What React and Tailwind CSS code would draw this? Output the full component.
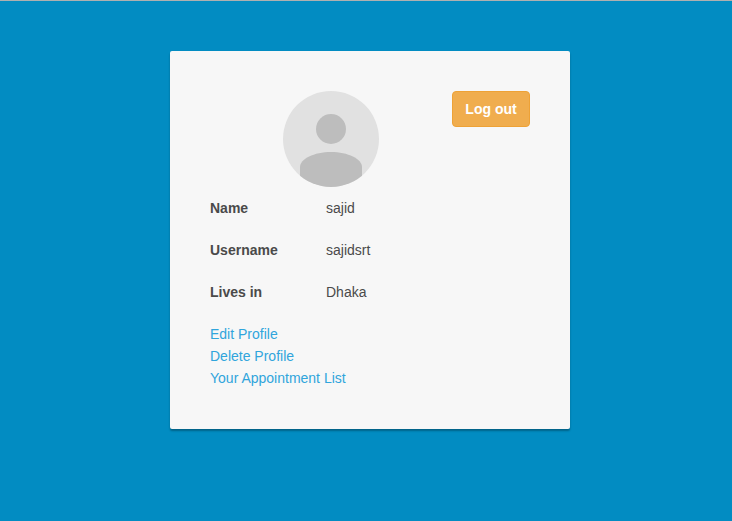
const details = [
  ["Name", "sajid"],
  ["Username", "sajidsrt"],
  ["Lives in", "Dhaka"],
];

const links = ["Edit Profile", "Delete Profile", "Your Appointment List"];

function Avatar() {
  return (
    <svg viewBox="0 0 96 96" className="ml-[73px] size-24" aria-label="Profile">
      <defs>
        <clipPath id="avatar-circle">
          <circle cx="48" cy="48" r="48" />
        </clipPath>
      </defs>
      <circle cx="48" cy="48" r="48" fill="#e1e1e1" />
      <circle cx="48" cy="38" r="15" fill="#bdbdbd" />
      <path
        clipPath="url(#avatar-circle)"
        fill="#bdbdbd"
        d="M17 96V76C17 68 31 61 48 61S79 68 79 76V96Z"
      />
    </svg>
  );
}

export default function App() {
  return (
    <div className="h-[521px] overflow-hidden border-t border-[#b0b0b0] bg-[#028cc2] pt-[50px] font-['Liberation_Sans',Arial,sans-serif] text-sm leading-5 text-[#4a4a4a]">
      <main className="ml-[170px] h-[378px] w-[400px] rounded-[2px] bg-[#f7f7f7] p-10 shadow-[0_2px_2px_rgba(0,0,0,0.3)]">
        <div className="flex items-start justify-between">
          <Avatar />
          <button className="h-9 w-[78px] rounded-[4px] border border-[#eea236] bg-[#f0ad4e] text-center font-bold text-white">
            Log out
          </button>
        </div>
        <dl className="mt-[11px] flex flex-col gap-[22px]">
          {details.map(([label, value]) => (
            <div key={label} className="grid grid-cols-[116px_1fr]">
              <dt className="font-bold">{label}</dt>
              <dd>{value}</dd>
            </div>
          ))}
        </dl>
        <nav className="mt-[22px] flex flex-col items-start gap-0.5">
          {links.map((label) => (
            <a key={label} href="#" className="text-[#30a5dc]">
              {label}
            </a>
          ))}
        </nav>
      </main>
    </div>
  );
}
